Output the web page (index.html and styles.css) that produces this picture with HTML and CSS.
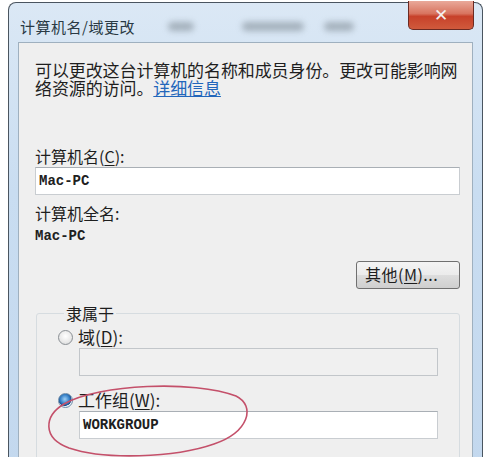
FILE: index.html
```html
<!DOCTYPE html>
<html lang="zh-CN">
<head>
    <meta charset="UTF-8">
    <meta name="viewport" content="width=device-width, initial-scale=1.0">
    <title>计算机名/域更改</title>
    <link rel="stylesheet" href="styles.css">
</head>
<body>
    <div class="window">
        <div class="titlebar">
            <span class="title">计算机名/域更改</span>
            <span class="smudge s1"></span>
            <span class="smudge s2"></span>
            <span class="smudge s3"></span>
            <div class="close-btn">&#x2715;</div>
        </div>
        <div class="panel">
            <p class="desc">可以更改这台计算机的名称和成员身份。更改可能影响网络资源的访问。<a href="#" class="link">详细信息</a></p>

            <div class="label first">计算机名(<u>C</u>):</div>
            <div class="textbox">Mac-PC</div>

            <div class="label">计算机全名:</div>
            <div class="value">Mac-PC</div>

            <div class="button-row">
                <div class="button">其他(<u>M</u>)...</div>
            </div>

            <fieldset class="group">
                <legend>隶属于</legend>
                <div class="radio-row">
                    <span class="radio"></span>
                    <span class="radio-label">域(<u>D</u>):</span>
                </div>
                <div class="textbox disabled"></div>

                <div class="radio-row second">
                    <span class="radio checked"></span>
                    <span class="radio-label">工作组(<u>W</u>):</span>
                </div>
                <div class="textbox">WORKGROUP</div>

                <svg class="mark" width="210" height="80" viewBox="0 0 210 80">
                    <path d="M20 22 C 55 2, 150 -2, 192 14 C 212 24, 205 50, 170 62 C 130 76, 60 78, 25 66 C -2 56, 0 34, 20 22"
                          fill="none" stroke="#c4506a" stroke-width="1.6"/>
                </svg>
            </fieldset>
        </div>
    </div>
</body>
</html>
```

FILE: styles.css
```css
body {
    margin: 0;
    background-color: #ffffff;
    font-family: "Noto Sans CJK SC", "Liberation Sans", sans-serif;
    color: #1e1e1e;
}
.window {
    margin: 2px 0 0 8px;
    width: 475px;
    height: 470px;
    border: 1px solid #4a5560;
    border-bottom: none;
    border-radius: 8px 8px 0 0;
    background: linear-gradient(to bottom, #dbe8f5 0%, #c9ddf1 40%, #c3d8ee 100%);
    padding: 0 9px 0 9px;
    box-sizing: border-box;
}
.titlebar {
    height: 39px;
    display: flex;
    align-items: flex-start;
    position: relative;
}
.title {
    font-size: 15px;
    line-height: 15px;
    margin: 16px 0 0 2px;
    color: #2a3a44;
    letter-spacing: 0.5px;
}
.smudge {
    position: absolute;
    top: 19px;
    height: 9px;
    background-color: #8d99a3;
    border-radius: 5px;
    filter: blur(3px);
    opacity: 0.7;
}
.s1 { left: 150px; width: 26px; }
.s2 { left: 224px; width: 62px; }
.s3 { left: 306px; width: 30px; }
.close-btn {
    margin-left: auto;
    margin-right: -1px;
    margin-top: -2px;
    width: 66px;
    height: 29px;
    border: 1px solid #6b2a22;
    border-top: none;
    border-radius: 0 0 5px 5px;
    background: linear-gradient(to bottom, #e9a99a 0%, #d8745f 45%, #c7412a 55%, #d05a3c 100%);
    color: #f4f0ee;
    font-size: 17px;
    font-weight: bold;
    text-align: center;
    line-height: 29px;
    box-sizing: border-box;
    font-family: "DejaVu Sans", sans-serif;
}
.panel {
    height: 430px;
    background-color: #efefef;
    border: 1px solid #9fb0bf;
    padding: 0 12px 0 16px;
}
.desc {
    margin: 18px 0 0 0;
    font-size: 17px;
    line-height: 18px;
    letter-spacing: -0.1px;
}
.link {
    color: #2266bb;
    text-decoration: underline;
    text-underline-offset: 1px;
}
.label {
    font-size: 16px;
    line-height: 19px;
    margin-top: 9px;
}
.label.first {
    margin-top: 50px;
}
u {
    text-decoration: underline;
    text-underline-offset: 2px;
}
.textbox {
    height: 28px;
    width: 425px;
    margin-top: 1px;
    background-color: #ffffff;
    border: 1px solid #c9cdd1;
    border-top-color: #a9afb5;
    box-sizing: border-box;
    font-family: "Liberation Mono", monospace;
    font-weight: bold;
    font-size: 14px;
    line-height: 26px;
    padding-left: 3px;
    color: #202020;
}
.value {
    font-family: "Liberation Mono", monospace;
    font-weight: bold;
    font-size: 14px;
    line-height: 16px;
    margin-top: 5px;
    color: #202020;
}
.button-row {
    display: flex;
    justify-content: flex-end;
    width: 425px;
    margin-top: 17px;
}
.button {
    width: 104px;
    height: 28px;
    box-sizing: border-box;
    border: 1px solid #707070;
    border-radius: 3px;
    background: linear-gradient(to bottom, #f4f4f4 0%, #ebebeb 50%, #dddddd 51%, #cfcfcf 100%);
    font-size: 16px;
    line-height: 25px;
    padding-left: 8px;
    letter-spacing: 0.5px;
}
.group {
    position: relative;
    margin: 15px 0 0 1px;
    width: 424px;
    padding: 0 21px 20px 20px;
    border: 1px solid #d6dce0;
    border-radius: 3px;
    height: 160px;
    box-sizing: border-box;
}
.group legend {
    font-size: 16px;
    line-height: 19px;
    padding: 0 2px;
    margin-left: 7px;
}
.radio-row {
    display: flex;
    align-items: center;
    gap: 5px;
    margin-top: 5px;
    height: 18px;
}
.radio-row.second {
    margin-top: 15px;
}
.radio {
    width: 15px;
    height: 15px;
    border-radius: 50%;
    border: 1px solid #8a8f94;
    background: radial-gradient(circle at 50% 40%, #ffffff 0%, #e8e8e8 60%, #cfd2d4 100%);
    margin-left: 1px;
    box-sizing: border-box;
}
.radio.checked {
    border-color: #6a8aa8;
    background: radial-gradient(circle at 45% 40%, #9fd0f6 0%, #2f7bc4 45%, #1d4f8a 60%, #e6eef5 65%, #ffffff 100%);
}
.radio-label {
    font-size: 17px;
    line-height: 18px;
}
.group .textbox {
    margin-left: 22px;
    margin-top: 2px;
    width: 359px;
}
.group .textbox.disabled {
    background-color: #f0f0f0;
    border-color: #c2c6ca;
}
.mark {
    position: absolute;
    left: 7px;
    top: 59px;
}
```
